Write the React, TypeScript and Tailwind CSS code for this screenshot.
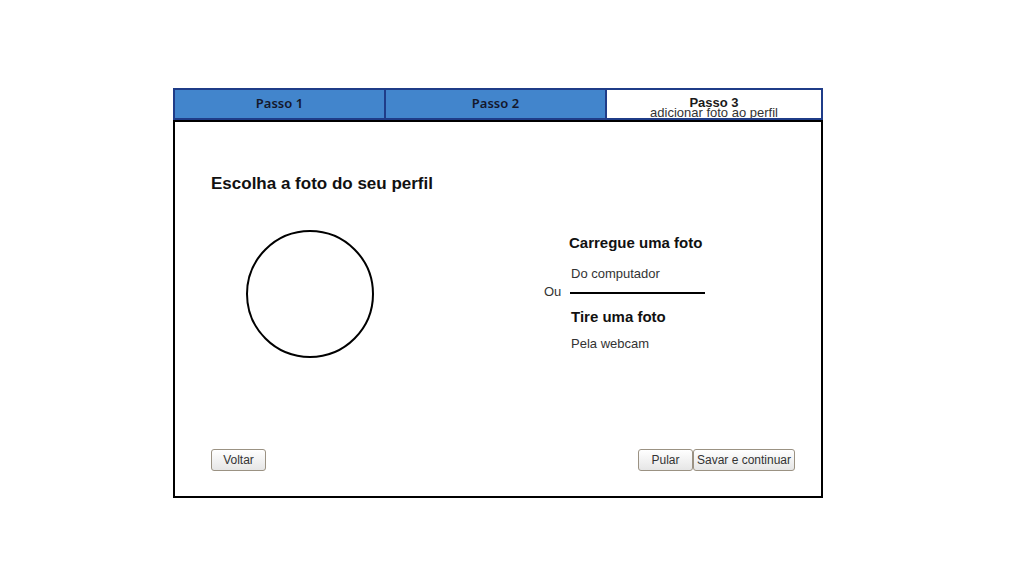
export default function App() {
  const btn =
    'h-[22px] border border-[#9b9283] rounded-[3px] bg-gradient-to-b from-white to-[#e6e6e6] text-[12px] text-[#333] leading-none'

  return (
    <div className="min-h-screen bg-white pl-[173px] pt-[88px] font-['Liberation_Sans',Arial,sans-serif]">
      <div className="w-[650px]">
        {/* steps */}
        <div className="flex h-[32px] border-2 border-[#1f3c88]">
          <div className="w-[211px] border-r-2 border-[#1f3c88] bg-[#4285cc] flex items-center justify-center font-['Noto_Sans',sans-serif] font-semibold text-[13px] text-[#14182b]">
            Passo 1
          </div>
          <div className="w-[221px] border-r-2 border-[#1f3c88] bg-[#4285cc] flex items-center justify-center font-['Noto_Sans',sans-serif] font-semibold text-[13px] text-[#14182b]">
            Passo 2
          </div>
          <div className="flex-1 bg-white flex flex-col items-center pt-[8px] overflow-hidden">
            <span className="font-bold text-[13px] leading-[10px] text-[#1a1a1a]">Passo 3</span>
            <span className="text-[13px] leading-[10px] text-[#333]">adicionar foto ao perfil</span>
          </div>
        </div>

        {/* card */}
        <div className="h-[378px] border-2 border-black flex flex-col">
          <div className="pl-[36px] pt-[52px]">
            <h1 className="font-bold text-[17px] leading-[20px] text-[#111]">Escolha a foto do seu perfil</h1>

            <div className="flex mt-[36px]">
              <div className="ml-[35px] w-[128px] h-[128px] rounded-full border-2 border-black" />

              <div className="ml-[170px] flex flex-col">
                <p className="pl-[25px] mt-[4px] font-bold text-[15px] leading-[18px] text-[#111]">Carregue uma foto</p>
                <p className="pl-[27px] mt-[14px] text-[13px] leading-[16px] text-[#333]">Do computador</p>
                <div className="mt-[3px] h-[16px] flex items-center">
                  <span className="w-[26px] text-[13px] text-[#333] leading-[16px] -mt-[2px]">Ou</span>
                  <div className="w-[135px] h-[2px] bg-black" />
                </div>
                <p className="pl-[27px] mt-[7px] font-bold text-[15px] leading-[18px] text-[#111]">Tire uma foto</p>
                <p className="pl-[27px] mt-[10px] text-[13px] leading-[16px] text-[#333]">Pela webcam</p>
              </div>
            </div>
          </div>

          <div className="mt-auto pl-[36px] pr-[26px] pb-[25px] flex items-center justify-between">
            <button className={`${btn} w-[55px]`}>Voltar</button>
            <div className="flex">
              <button className={`${btn} w-[55px]`}>Pular</button>
              <button className={`${btn} w-[102px]`}>Savar e continuar</button>
            </div>
          </div>
        </div>
      </div>
    </div>
  )
}
